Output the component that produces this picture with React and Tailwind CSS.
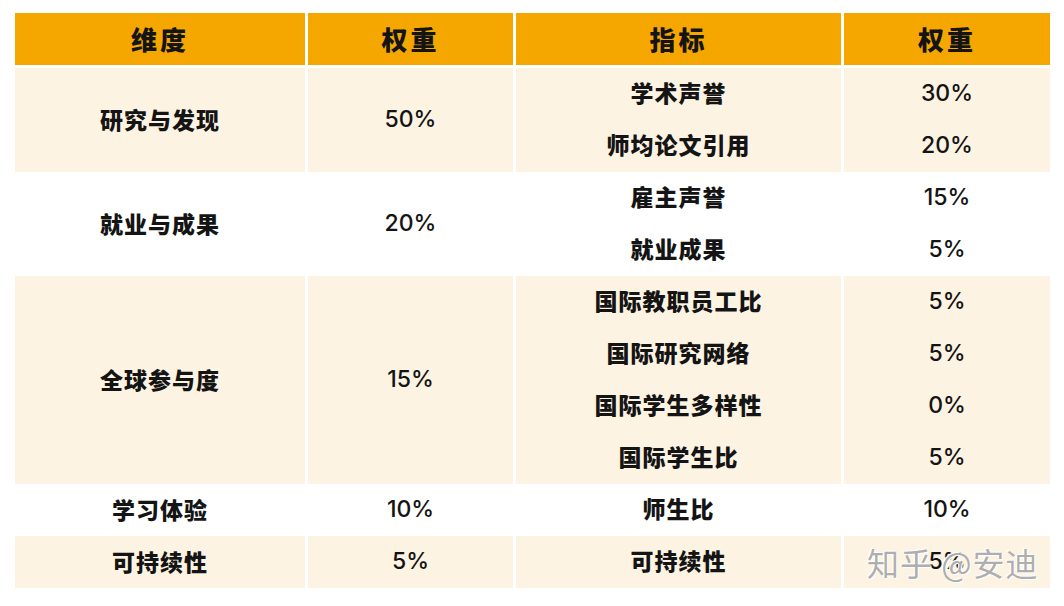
const groups = [
  {
    dim: '研究与发现',
    weight: '50%',
    cream: true,
    items: [
      ['学术声誉', '30%'],
      ['师均论文引用', '20%'],
    ],
  },
  {
    dim: '就业与成果',
    weight: '20%',
    cream: false,
    items: [
      ['雇主声誉', '15%'],
      ['就业成果', '5%'],
    ],
  },
  {
    dim: '全球参与度',
    weight: '15%',
    cream: true,
    items: [
      ['国际教职员工比', '5%'],
      ['国际研究网络', '5%'],
      ['国际学生多样性', '0%'],
      ['国际学生比', '5%'],
    ],
  },
  {
    dim: '学习体验',
    weight: '10%',
    cream: false,
    items: [['师生比', '10%']],
  },
  {
    dim: '可持续性',
    weight: '5%',
    cream: true,
    items: [['可持续性', '5%']],
  },
];

const cjk = "font-['Noto_Sans_CJK_SC',sans-serif]";
const num = "font-['Inter','Noto_Sans_CJK_SC',sans-serif]";
const cols = 'grid grid-cols-[290px_205px_325px_206px] gap-x-[3px]';

function Cell({ cream, children, className = '' }) {
  return (
    <div className={`flex flex-col ${cream ? 'bg-[#fdf3e2]' : 'bg-white'} ${className}`}>
      {children}
    </div>
  );
}

export default function App() {
  return (
    <div className="relative w-[1064px] h-[606px] bg-white pt-[13px] pl-[15px] text-[#141414]">
      {/* header */}
      <div className={`${cols} h-[52px] mb-[3px]`}>
        {['维度', '权重', '指标', '权重'].map((h, i) => (
          <div
            key={i}
            className={`bg-[#f5a700] flex items-center justify-center pb-[2px] text-[26px] font-black tracking-[3px] ${cjk}`}
          >
            {h}
          </div>
        ))}
      </div>

      {/* body */}
      {groups.map((g, gi) => (
        <div key={gi} className={cols}>
          <Cell cream={g.cream} className={`items-center justify-center pb-[2px] text-[23px] font-black tracking-[1px] ${cjk}`}>
            {g.dim}
          </Cell>
          <Cell cream={g.cream} className={`items-center justify-center pb-[2px] text-[23px] font-medium ${num}`}>
            {g.weight}
          </Cell>
          <Cell cream={g.cream}>
            {g.items.map(([name]) => (
              <div key={name} className={`h-[52px] flex items-center justify-center pb-[3px] text-[23px] font-black tracking-[1px] ${cjk}`}>
                {name}
              </div>
            ))}
          </Cell>
          <Cell cream={g.cream}>
            {g.items.map(([name, w]) => (
              <div key={name} className={`h-[52px] flex items-center justify-center pb-[2px] text-[23px] font-medium ${num}`}>
                {w}
              </div>
            ))}
          </Cell>
        </div>
      ))}

      {/* watermark */}
      <div
        className={`absolute left-[867px] top-[538px] text-[32px] text-[#a3a3a3]/90 tracking-[1px] ${cjk} [text-shadow:1px_1px_0_#ffffff,-1px_-1px_0_#ffffff]`}
      >
        知乎 @安迪
      </div>
    </div>
  );
}
